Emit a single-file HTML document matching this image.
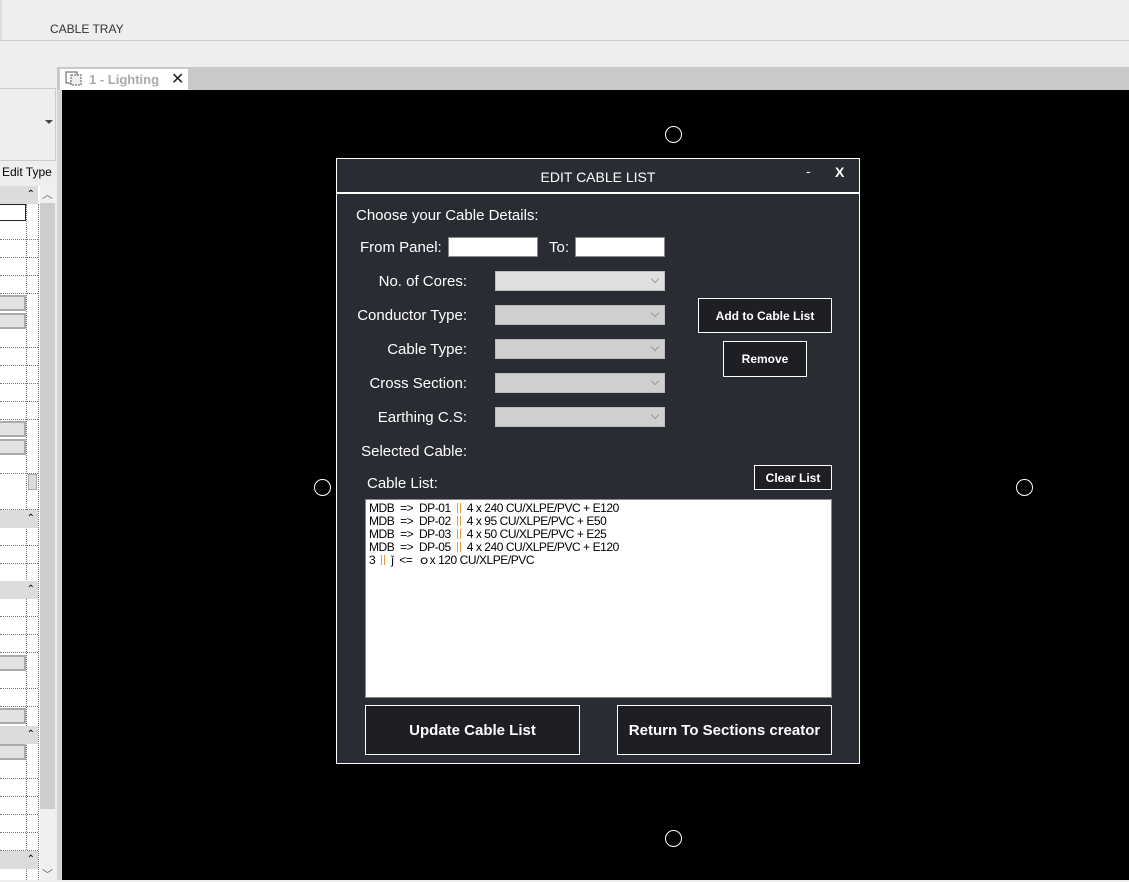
<!DOCTYPE html>
<html><head><meta charset="utf-8"><style>
*{margin:0;padding:0;box-sizing:border-box}
body{width:1129px;height:880px;position:relative;overflow:hidden;background:#eeeeee;font-family:"Liberation Sans",sans-serif}
.a{position:absolute}
.lbl{position:absolute;color:#fff;font-size:15px;text-align:right;width:200px}
.dd{position:absolute;left:495px;width:170px;height:20px;background:#cfcfcf;border:1px solid #bbb}
.dd:after{content:"";position:absolute;right:6px;top:4px;width:5px;height:5px;border-right:1px solid #999;border-bottom:1px solid #999;transform:rotate(45deg)}
.btn{position:absolute;border:1px solid #fff;background:#1e1f24;color:#fff;font-weight:bold;display:flex;align-items:center;justify-content:center}
.row{position:absolute;left:0;width:38px;height:18px;border-bottom:1px dotted #777}
.hdr{position:absolute;left:0;width:38px;height:18px;background:#dcdcdc;font-size:10px;text-align:right;padding-right:3px;line-height:18px}
.gb{position:absolute;left:0;width:26px;height:16px;background:#e2e2e2;border:2px solid #aaa;border-left:none}
.circ{position:absolute;width:17px;height:17px;border:1.5px solid #fff;border-radius:50%}
.ls{font-size:12px;line-height:13px;color:#000;white-space:pre;letter-spacing:-0.45px}
.o{display:inline-block;width:4px;height:10px;border-left:1.5px solid #e59a3a;border-right:1.5px solid #e59a3a;margin:0 6px -1px 6px}
</style></head><body>
<div class="a" style="left:50px;top:22px;font-size:12px;color:#333">CABLE TRAY</div>
<div class="a" style="left:0;top:40px;width:1129px;height:1px;background:#ccc"></div>
<div class="a" style="left:0;top:0;width:2px;height:40px;background:#ddd"></div>
<div class="a" style="left:57px;top:67px;width:1072px;height:23px;background:#c9c9c9"></div>
<div class="a" style="left:60px;top:69px;width:128px;height:21px;background:#fff"></div>
<svg class="a" style="left:65px;top:71px" width="18" height="16"><rect x="1" y="1" width="11" height="11" fill="#fff" stroke="#555"/><rect x="6" y="4" width="10" height="10" fill="#eee" stroke="#555" stroke-dasharray="2,1"/></svg>
<div class="a" style="left:89px;top:72px;font-size:13px;color:#aaa;font-weight:bold">1 - Lighting</div>
<div class="a" style="left:171px;top:69px;font-size:16px;color:#222">✕</div>
<div class="a" style="left:0;top:88px;width:56px;height:73px;border:1px solid #ccc;border-left:none;background:#eee"></div>
<div class="a" style="left:45px;top:120px;border-left:4px solid transparent;border-right:4px solid transparent;border-top:4px solid #444"></div>
<div class="a" style="left:2px;top:165px;font-size:12px;color:#000">Edit Type</div>
<div class="a" style="left:0;top:186px;width:40px;height:694px;background:#fff"></div>
<div class="a" style="left:26px;top:204px;width:1px;height:676px;border-left:1px dotted #777"></div>
<div class="a" style="left:38px;top:204px;width:1px;height:676px;border-left:1px dotted #777"></div>
<div class="a" style="left:40px;top:186px;width:15px;height:694px;background:#f0f0f0"></div>
<div class="a" style="left:40px;top:203px;width:15px;height:606px;background:#cdcdcd"></div>
<div class="a" style="left:42px;top:186px;font-size:11px;color:#666">︿</div>
<div class="a" style="left:42px;top:866px;font-size:11px;color:#666">﹀</div>
<div class="a" style="left:57px;top:90px;width:5px;height:790px;background:#d5d5d5"></div>
<div class="hdr" style="top:186px">⌃</div>
<div class="a" style="left:0;top:204px;width:26px;height:17px;border:1.5px solid #222;border-left:none;background:#fff"></div>
<div class="row" style="top:222px"></div><div class="row" style="top:240px"></div><div class="row" style="top:258px"></div><div class="row" style="top:276px"></div>
<div class="gb" style="top:295px"></div><div class="gb" style="top:313px"></div>
<div class="row" style="top:330px"></div><div class="row" style="top:348px"></div><div class="row" style="top:366px"></div><div class="row" style="top:384px"></div><div class="row" style="top:402px"></div>
<div class="gb" style="top:421px"></div><div class="gb" style="top:439px"></div>
<div class="row" style="top:456px"></div>
<div class="a" style="left:28px;top:474px;width:9px;height:16px;background:#ddd;border:1px solid #aaa"></div>
<div class="row" style="top:492px"></div>
<div class="hdr" style="top:510px">⌃</div>
<div class="row" style="top:528px"></div><div class="row" style="top:546px"></div><div class="row" style="top:564px"></div>
<div class="hdr" style="top:581px">⌃</div>
<div class="row" style="top:599px"></div><div class="row" style="top:617px"></div><div class="row" style="top:635px"></div>
<div class="gb" style="top:655px"></div>
<div class="row" style="top:671px"></div><div class="row" style="top:689px"></div>
<div class="gb" style="top:708px"></div>
<div class="hdr" style="top:726px">⌃</div>
<div class="gb" style="top:744px"></div>
<div class="row" style="top:761px"></div><div class="row" style="top:779px"></div><div class="row" style="top:797px"></div><div class="row" style="top:815px"></div><div class="row" style="top:833px"></div>
<div class="hdr" style="top:851px">⌃</div>
<div class="a" style="left:62px;top:90px;width:1067px;height:790px;background:#000"></div>
<div class="circ" style="left:665px;top:126px"></div>
<div class="circ" style="left:314px;top:479px"></div>
<div class="circ" style="left:1016px;top:479px"></div>
<div class="circ" style="left:665px;top:830px"></div>
<div class="a" style="left:336px;top:158px;width:524px;height:606px;background:#2a2c33;border:1px solid #fff"></div>
<div class="a" style="left:337px;top:192px;width:522px;height:2px;background:#fff"></div>
<div class="a" style="left:337px;top:169px;width:522px;text-align:center;color:#fff;font-size:14px">EDIT CABLE LIST</div>
<div class="a" style="left:806px;top:163px;color:#fff;font-size:14px">-</div>
<div class="a" style="left:835px;top:164px;color:#fff;font-size:14px;font-weight:bold">X</div>
<div class="a" style="left:356px;top:207px;color:#fff;font-size:15px">Choose your Cable Details:</div>
<div class="a" style="left:360px;top:239px;color:#fff;font-size:15px">From Panel:</div>
<div class="a" style="left:448px;top:237px;width:90px;height:20px;background:#fff;border:1px solid #888"></div>
<div class="a" style="left:549px;top:239px;color:#fff;font-size:15px">To:</div>
<div class="a" style="left:575px;top:237px;width:90px;height:20px;background:#fff;border:1px solid #888"></div>
<div class="lbl" style="left:267px;top:273px">No. of Cores:</div>
<div class="dd" style="top:271px;background:#e0e0e0"></div>
<div class="lbl" style="left:267px;top:307px">Conductor Type:</div>
<div class="dd" style="top:305px"></div>
<div class="lbl" style="left:267px;top:341px">Cable Type:</div>
<div class="dd" style="top:339px"></div>
<div class="lbl" style="left:267px;top:375px">Cross Section:</div>
<div class="dd" style="top:373px"></div>
<div class="lbl" style="left:267px;top:409px">Earthing C.S:</div>
<div class="dd" style="top:407px"></div>
<div class="lbl" style="left:267px;top:443px">Selected Cable:</div>
<div class="a" style="left:367px;top:475px;color:#fff;font-size:15px">Cable List:</div>
<div class="btn" style="left:698px;top:298px;width:134px;height:35px;font-size:12px">Add to Cable List</div>
<div class="btn" style="left:723px;top:341px;width:84px;height:36px;font-size:12px">Remove</div>
<div class="btn" style="left:754px;top:465px;width:78px;height:25px;font-size:12px">Clear List</div>
<div class="a ls" style="left:365px;top:499px;width:467px;height:199px;background:#fff;border:1px solid #888;padding:2px 3px">MDB  =>  DP-01<span class="o"></span>4 x 240 CU/XLPE/PVC + E120
MDB  =>  DP-02<span class="o"></span>4 x 95 CU/XLPE/PVC + E50
MDB  =>  DP-03<span class="o"></span>4 x 50 CU/XLPE/PVC + E25
MDB  =>  DP-05<span class="o"></span>4 x 240 CU/XLPE/PVC + E120
3<span class="o"></span>ǰ  <=  ｏx 120 CU/XLPE/PVC</div>
<div class="btn" style="left:365px;top:705px;width:215px;height:50px;font-size:15px">Update Cable List</div>
<div class="btn" style="left:617px;top:705px;width:215px;height:50px;font-size:15px">Return To Sections creator</div>
</body></html>
